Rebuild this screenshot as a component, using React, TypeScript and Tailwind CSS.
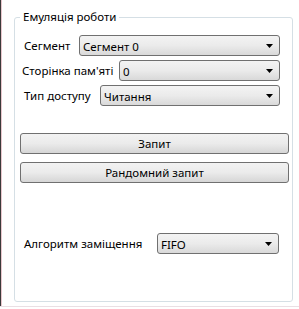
import React from 'react';

const font = { fontFamily: '"Noto Sans", "Open Sans", sans-serif' };

const Combo: React.FC<{ value: string; className?: string }> = ({ value, className = '' }) => (
  <div
    className={`flex h-[21px] items-center justify-between rounded-[3px] border border-[#707070] bg-gradient-to-b from-[#f3f3f3] via-[#ebebeb] to-[#d9d9d9] pl-[3px] pr-[6px] text-[11.5px] text-black ${className}`}
  >
    <span className="pt-[2px] leading-none">{value}</span>
    <svg width="7" height="4" viewBox="0 0 7 4">
      <path d="M0 0 L7 0 L3.5 4 Z" fill="#000" />
    </svg>
  </div>
);

const Button: React.FC<{ label: string }> = ({ label }) => (
  <button className="flex h-[21px] w-full items-center justify-center rounded-[3px] border border-[#707070] bg-gradient-to-b from-[#f2f2f2] via-[#ebebeb] to-[#d6d6d6] text-[11.5px] text-black">
    {label}
  </button>
);

const App: React.FC = () => {
  return (
    <div className="flex h-[309px] w-[299px] flex-col bg-white" style={font}>
      <div className="flex flex-1 border-l border-l-[#3a3a3a]">
        <div className="flex flex-1 border-l border-l-[#e8c6cc] pl-[12px] pr-[6px]">
          <fieldset className="mt-[9px] mb-[4px] flex h-[293px] w-[278px] flex-col rounded-[3px] border border-[#d5dfe5] pl-[5px] pr-[12px]">
            <legend className="px-[3px] text-[11.5px] leading-[16px] text-black">Емуляція роботи</legend>

            <div className="mt-[10px] flex flex-col gap-[4px] pl-[4px] text-[11.5px]">
              <div className="flex items-center">
                <span className="w-[55px]">Сегмент</span>
                <Combo value="Сегмент 0" className="flex-1" />
              </div>
              <div className="flex items-center">
                <span className="-ml-[2px] w-[97px]">Сторінка пам'яті</span>
                <Combo value="0" className="flex-1" />
              </div>
              <div className="flex items-center">
                <span className="w-[76px]">Тип доступу</span>
                <Combo value="Читання" className="flex-1" />
              </div>
            </div>

            <div className="mt-[27px] -mr-[9px] flex flex-col gap-[8px]">
              <Button label="Запит" />
              <Button label="Рандомний запит" />
            </div>

            <div className="mt-[50px] flex items-center pl-[4px] text-[11.5px]">
              <span className="w-[133px]">Алгоритм заміщення</span>
              <Combo value="FIFO" className="mr-[1px] w-[122px]" />
            </div>
          </fieldset>
        </div>
      </div>
      <div className="h-[3px] border-t border-t-[#eadfe4] bg-white" />
    </div>
  );
};

export default App;
